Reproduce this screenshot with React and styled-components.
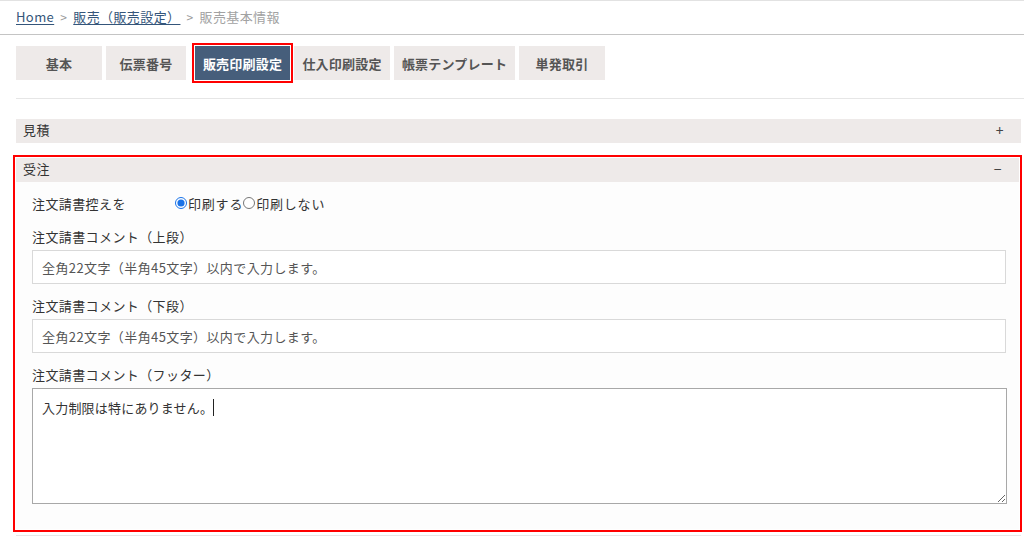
import styled, { createGlobalStyle } from "styled-components";

const GlobalStyle = createGlobalStyle`
  html, body {
    margin: 0;
    padding: 0;
    background: #ffffff;
  }
  body {
    font-family: "Noto Sans CJK JP", "Noto Sans", sans-serif;
    font-size: 13px;
    letter-spacing: 0.4px;
    color: #333333;
  }
  * {
    box-sizing: border-box;
  }
`;

const Page = styled.div`
  width: 1024px;
  height: 540px;
  overflow: hidden;
  border-top: 1px solid #e2e2e2;
`;

const Breadcrumb = styled.nav`
  height: 34px;
  padding: 0 0 2px 16px;
  display: flex;
  align-items: center;
  gap: 6px;
  border-bottom: 1px solid #c4c4c4;
  font-size: 13px;
`;

const Crumb = styled.a`
  color: #34557a;
  text-decoration: underline;
  text-underline-offset: 2px;
`;

const CrumbSep = styled.span`
  color: #9a9a9a;
  font-size: 12px;
`;

const CrumbCurrent = styled.span`
  color: #a2a2a2;
`;

const TabBar = styled.div`
  margin-left: 16px;
  padding: 11px 0 18px;
  display: flex;
  gap: 4px;
  border-bottom: 1px solid #e6e6e6;
`;

const Tab = styled.button`
  width: ${(p) => p.$width}px;
  height: 34px;
  padding: 0;
  margin-left: ${(p) => (p.$active ? "5px" : "0")};
  border: none;
  background: ${(p) => (p.$active ? "#465e7b" : "#eeeae9")};
  color: ${(p) => (p.$active ? "#ffffff" : "#555555")};
  font-family: inherit;
  font-size: 13px;
  font-weight: 700;
  letter-spacing: 0.2px;
  cursor: pointer;
  outline: ${(p) => (p.$active ? "2px solid #ff0000" : "none")};
  outline-offset: 1px;
`;

const Accordion = styled.div`
  margin: 20px 3px 0 16px;
  display: flex;
  flex-direction: column;
  gap: 15px;
`;

const Section = styled.section`
  background: #fdfdfd;
  outline: ${(p) => (p.$highlight ? "2px solid #ff0000" : "none")};
  outline-offset: 1px;
  margin-right: ${(p) => (p.$highlight ? "2px" : "0")};
`;

const SectionHeader = styled.div`
  height: 24px;
  padding: 0 17px 3px 7px;
  display: flex;
  align-items: center;
  justify-content: space-between;
  background: #eeeae9;
  color: #333333;
  font-size: 13px;
`;

const Toggle = styled.span`
  font-size: 14px;
  color: #444444;
`;

const SectionBody = styled.div`
  padding: 10px 13px 25px 16px;
  display: flex;
  flex-direction: column;
  gap: 12px;
`;

const RadioRow = styled.div`
  display: flex;
  align-items: center;
  height: 22px;
  margin-bottom: 1px;
`;

const RowLabel = styled.span`
  width: 143px;
  color: #333333;
`;

const RadioOption = styled.label`
  display: flex;
  align-items: center;
  color: #333333;
  letter-spacing: 0.8px;
  cursor: pointer;
`;

const Radio = styled.input.attrs({ type: "radio" })`
  margin: 0 1px 0 0;
  width: 12px;
  height: 12px;
  accent-color: #1a73e8;
`;

const Field = styled.div`
  display: flex;
  flex-direction: column;
  gap: 3px;
`;

const FieldLabel = styled.label`
  line-height: 20px;
  color: #333333;
`;

const TextInput = styled.input.attrs({ type: "text" })`
  height: 34px;
  padding: 0 9px;
  border: 1px solid #d9d9d9;
  background: #ffffff;
  font-family: inherit;
  font-size: 13px;
  letter-spacing: 0.4px;
  color: #555555;
  outline: none;
`;

const AreaWrap = styled.div`
  position: relative;
  margin-right: -1px;
`;

const TextArea = styled.textarea`
  display: block;
  width: 100%;
  height: 116px;
  padding: 9px 9px;
  border: 1px solid #a8a8a8;
  background: #ffffff;
  font-family: inherit;
  font-size: 13px;
  letter-spacing: 0.2px;
  line-height: 20px;
  color: #333333;
  outline: none;
`;

const Caret = styled.span`
  position: absolute;
  left: 181px;
  top: 11px;
  width: 1px;
  height: 17px;
  background: #222222;
`;

const BottomRule = styled.div`
  margin: 6px 3px 0 16px;
  border-top: 1px solid #e6e6e6;
`;

const tabs = [
  { label: "基本", width: 86 },
  { label: "伝票番号", width: 80 },
  { label: "販売印刷設定", width: 95, active: true },
  { label: "仕入印刷設定", width: 96 },
  { label: "帳票テンプレート", width: 121 },
  { label: "単発取引", width: 86 },
];

const placeholderText = "全角22文字（半角45文字）以内で入力します。";

export default function App() {
  return (
    <>
      <GlobalStyle />
      <Page>
        <Breadcrumb>
          <Crumb href="#">Home</Crumb>
          <CrumbSep>&gt;</CrumbSep>
          <Crumb href="#">販売（販売設定）</Crumb>
          <CrumbSep>&gt;</CrumbSep>
          <CrumbCurrent>販売基本情報</CrumbCurrent>
        </Breadcrumb>

        <TabBar>
          {tabs.map((t) => (
            <Tab key={t.label} $width={t.width} $active={t.active}>
              {t.label}
            </Tab>
          ))}
        </TabBar>

        <Accordion>
          <Section>
            <SectionHeader>
              <span>見積</span>
              <Toggle>+</Toggle>
            </SectionHeader>
          </Section>

          <Section $highlight>
            <SectionHeader>
              <span>受注</span>
              <Toggle>−</Toggle>
            </SectionHeader>
            <SectionBody>
              <RadioRow>
                <RowLabel>注文請書控えを</RowLabel>
                <RadioOption>
                  <Radio name="print" defaultChecked />
                  印刷する
                </RadioOption>
                <RadioOption>
                  <Radio name="print" />
                  印刷しない
                </RadioOption>
              </RadioRow>

              <Field>
                <FieldLabel>注文請書コメント（上段）</FieldLabel>
                <TextInput defaultValue={placeholderText} />
              </Field>

              <Field>
                <FieldLabel>注文請書コメント（下段）</FieldLabel>
                <TextInput defaultValue={placeholderText} />
              </Field>

              <Field>
                <FieldLabel>注文請書コメント（フッター）</FieldLabel>
                <AreaWrap>
                  <TextArea defaultValue="入力制限は特にありません。" />
                  <Caret />
                </AreaWrap>
              </Field>
            </SectionBody>
          </Section>
        </Accordion>
        <BottomRule />
      </Page>
    </>
  );
}
